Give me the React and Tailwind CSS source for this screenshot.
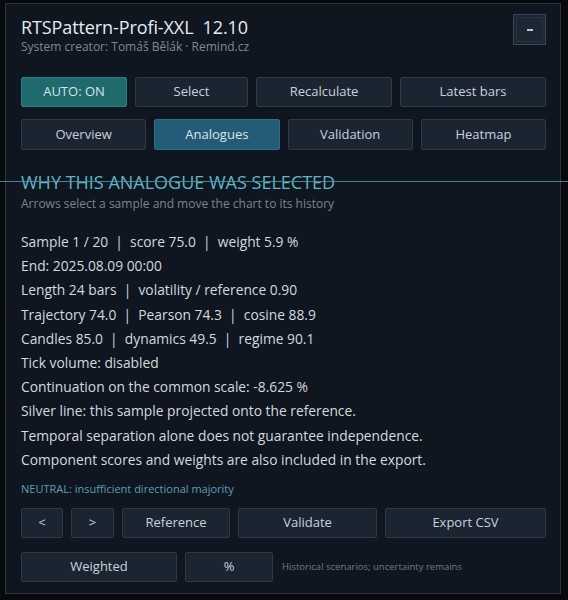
import { useState } from 'react'

const FONT = { fontFamily: '"Open Sans", "Noto Sans", Arial, sans-serif' }

const btn = 'h-[30px] flex items-center justify-center rounded-[2px] border text-[13px] text-[#c9d2db]'
const plain = 'bg-[#1b2531] border-[#2d3946]'

const lines = [
  'Sample 1 / 20  |  score 75.0  |  weight 5.9 %',
  'End: 2025.08.09 00:00',
  'Length 24 bars  |  volatility / reference 0.90',
  'Trajectory 74.0  |  Pearson 74.3  |  cosine 88.9',
  'Candles 85.0  |  dynamics 49.5  |  regime 90.1',
  'Tick volume: disabled',
  'Continuation on the common scale: -8.625 %',
  'Silver line: this sample projected onto the reference.',
  'Temporal separation alone does not guarantee independence.',
  'Component scores and weights are also included in the export.',
]

export default function App() {
  const [tab, setTab] = useState('Analogues')
  const tabs = ['Overview', 'Analogues', 'Validation', 'Heatmap']

  return (
    <div className="relative w-[568px] h-[600px] bg-[#07090d] pt-[3px] pl-[5px]" style={FONT}>
      <div className="w-[556px] h-[591px] border border-[#2a3440] bg-[#0f1620] pl-[15px] pr-[14px] pt-[11px]">
        <div className="flex justify-between items-start">
          <div>
            <div className="text-[18px] leading-[24px] text-[#e6ebef] whitespace-pre tracking-[-0.1px]">RTSPattern-Profi-XXL  12.10</div>
            <div className="text-[12px] leading-[16px] text-[#7f8992]">System creator: Tomáš Bělák · Remind.cz</div>
          </div>
          <button className="w-[33px] h-[31px] -mt-[1px] flex items-center justify-center border border-[#3a4653] bg-[#1c2733] p-[2px]">
            <span className="w-full h-full border border-[#283340] flex items-center justify-center">
              <span className="block w-[6px] h-[2px] bg-[#b9c2ca]" />
            </span>
          </button>
        </div>

        <div className="mt-[22px] flex gap-2">
          <button className={`${btn} w-[106px] bg-[#1e6a6d] border-[#2a7f82] text-[#d6e4e6]`}>AUTO: ON</button>
          <button className={`${btn} ${plain} w-[113px]`}>Select</button>
          <button className={`${btn} ${plain} w-[136px]`}>Recalculate</button>
          <button className={`${btn} ${plain} flex-1`}>Latest bars</button>
        </div>

        <div className="mt-[12px] grid grid-cols-4 gap-2">
          {tabs.map(t => (
            <button
              key={t}
              onClick={() => setTab(t)}
              className={`${btn} h-[31px] ${t === tab ? 'bg-[#245c77] border-[#2e6d8a] text-[#d9e4ea]' : plain}`}
            >
              {t}
            </button>
          ))}
        </div>

        <div className="mt-[20px] text-[18px] leading-[24px] text-[#5fb4c6]">WHY THIS ANALOGUE WAS SELECTED</div>
        <div className="mt-[2px] text-[12px] leading-[16px] text-[#7b858e]">Arrows select a sample and move the chart to its history</div>

        <div className="mt-[18px] text-[13.8px] leading-[24.2px] text-[#d3d9df] whitespace-pre">
          {lines.map(l => (
            <div key={l}>{l}</div>
          ))}
        </div>

        <div className="mt-[9px] text-[11px] leading-[16px] text-[#5f9fb2]">NEUTRAL: insufficient directional majority</div>

        <div className="mt-[11px] flex gap-2">
          <button className={`${btn} ${plain} w-[42px]`}>&lt;</button>
          <button className={`${btn} ${plain} w-[43px]`}>&gt;</button>
          <button className={`${btn} ${plain} w-[108px]`}>Reference</button>
          <button className={`${btn} ${plain} w-[139px]`}>Validate</button>
          <button className={`${btn} ${plain} flex-1`}>Export CSV</button>
        </div>

        <div className="mt-[14px] flex items-center gap-2">
          <button className={`${btn} ${plain} w-[156px]`}>Weighted</button>
          <button className={`${btn} ${plain} w-[88px]`}>%</button>
          <span className="ml-[1px] text-[9.5px] text-[#6f7a84]">Historical scenarios; uncertainty remains</span>
        </div>
      </div>

      <div className="absolute left-0 right-0 top-[181px] h-[1px] bg-[#4e8f95] opacity-90" />
    </div>
  )
}
